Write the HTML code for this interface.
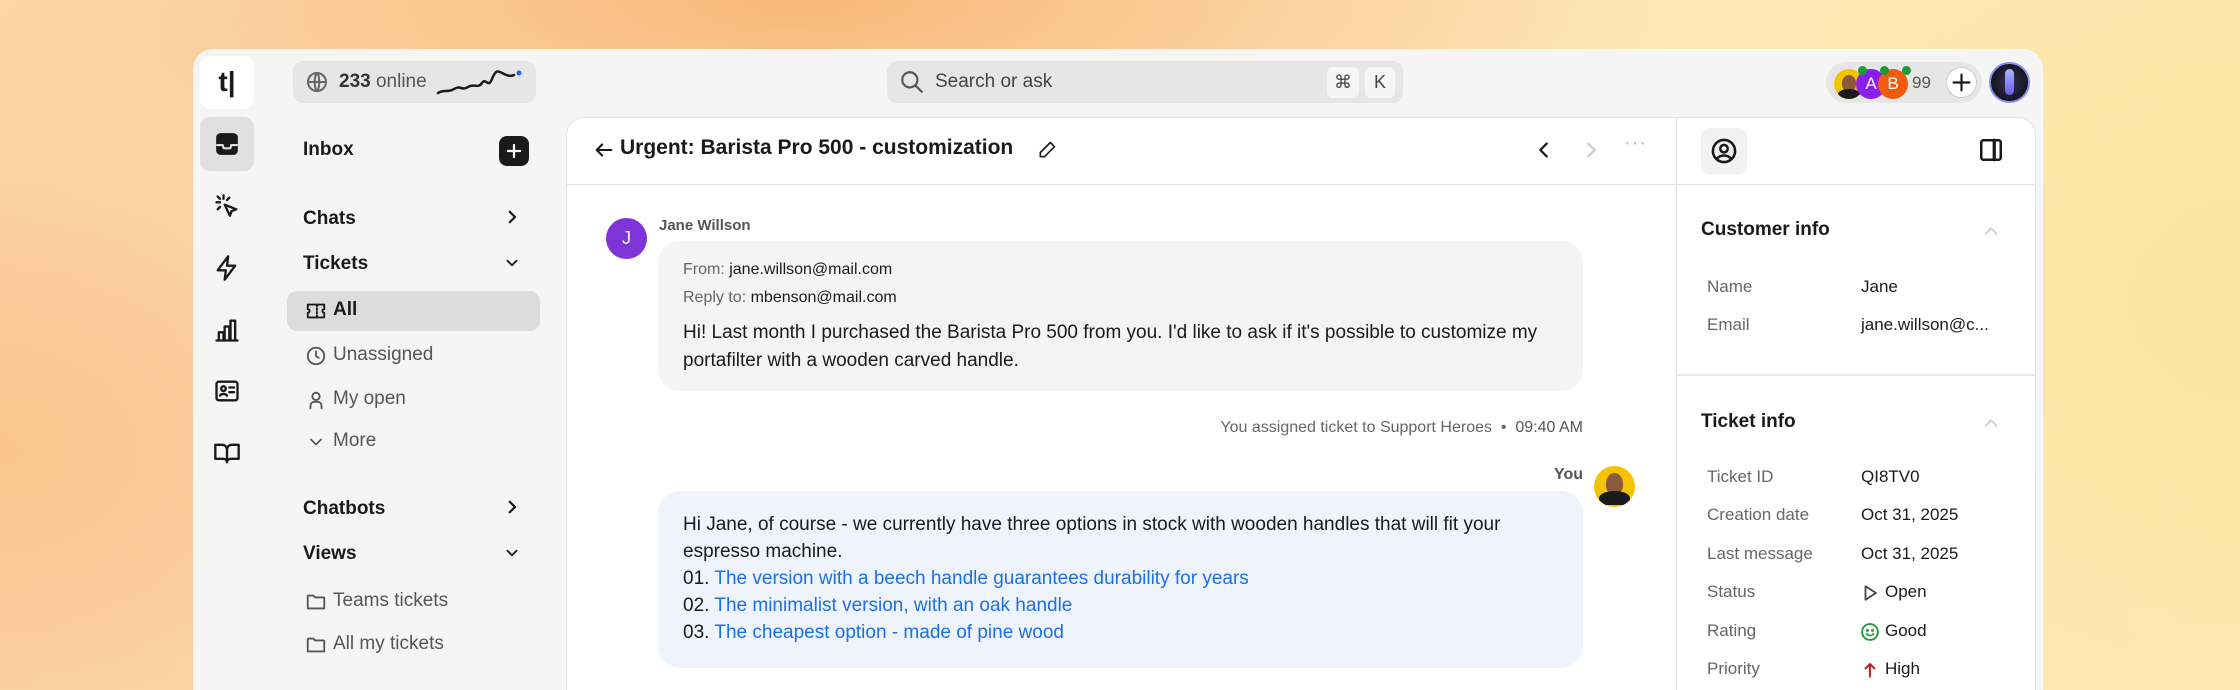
<!DOCTYPE html>
<html><head><meta charset="utf-8"><style>
*{box-sizing:border-box;margin:0;padding:0}
html,body{width:2240px;height:690px;overflow:hidden}
body{font-family:"Liberation Sans",sans-serif;color:#1a1a1a;position:relative}
.bg{position:absolute;left:0;top:0;width:2240px;height:690px;
background:radial-gradient(ellipse 700px 500px at 0px 450px,#f9c48f 0%,rgba(249,196,143,0) 100%),
radial-gradient(ellipse 900px 250px at 800px 0px,#f7b87a 0%,rgba(247,184,122,0) 100%),
radial-gradient(ellipse 700px 600px at 2240px 300px,#fbe3a0 0%,rgba(251,227,160,0) 100%),
linear-gradient(90deg,#fbdcae,#fde7bd 50%,#fdeab5)}
.abs{position:absolute}
.win{left:193px;top:49px;width:1850px;height:641px;background:#f5f5f5;border-radius:20px 20px 0 0;overflow:hidden}
.main{left:373px;top:68px;width:1470px;height:573px;background:#fff;border:1px solid #e3e3e3;border-bottom:none;border-radius:18px 18px 0 0;overflow:hidden}
svg{fill:none;stroke:#1a1a1a;stroke-width:2;stroke-linecap:round;stroke-linejoin:round}
.nav{font-size:19px;font-weight:bold;left:110px}
.item{font-size:19px;color:#555;left:140px}
.cnt{font-size:17px;color:#555;right:1327px;text-align:right}
.lbl{font-size:17px;color:#666;left:1514px}
.val{font-size:17px;color:#1a1a1a;left:1668px}
a{color:#1c6fe8;text-decoration:none}
</style></head><body>
<div class="bg"></div>
<div class="abs win">
 <div class="abs" style="left:7px;top:7px;width:54px;height:53px;background:#fff;border-radius:10px;font-size:28px;font-weight:bold;text-align:center;line-height:52px">t|</div>
 <div class="abs" style="left:7px;top:68px;width:54px;height:54px;background:#e0e0e0;border-radius:10px"></div>
 <svg class="abs" style="left:21px;top:82px" width="26" height="26" viewBox="0 0 24 24"><rect x="3" y="3" width="18" height="18" rx="3" fill="#1a1a1a"/><path d="M3 13h5l1 3h6l1-3h5" stroke="#e0e0e0"/></svg>
 <svg class="abs" style="left:20px;top:144px" width="28" height="28" viewBox="0 0 24 24"><path d="M10 10l10 4-4 1.5-1.5 4z"/><path d="M9 2v3M3 8h3M4 3l2 2M4 14l2-2M14 4l-2 2"/></svg>
 <svg class="abs" style="left:20px;top:205px" width="28" height="28" viewBox="0 0 24 24"><path d="M13 2L4 14h7l-1 8 9-12h-7z"/></svg>
 <svg class="abs" style="left:20px;top:267px" width="28" height="28" viewBox="0 0 24 24"><path d="M3 21h18M5 21v-7h4v7M10 21V9h4v12M15 21V4h4v17"/></svg>
 <svg class="abs" style="left:20px;top:328px" width="28" height="28" viewBox="0 0 24 24"><rect x="3" y="4" width="18" height="16" rx="2"/><circle cx="9" cy="10" r="2"/><path d="M6 16c1-2 5-2 6 0M14 9h4M14 13h4"/></svg>
 <svg class="abs" style="left:20px;top:390px" width="28" height="28" viewBox="0 0 24 24"><path d="M2 5h6a4 4 0 014 4v11a3 3 0 00-3-3H2zM22 5h-6a4 4 0 00-4 4v11a3 3 0 013-3h7z"/></svg>

 <div class="abs" style="left:100px;top:12px;width:243px;height:42px;background:#e6e6e6;border-radius:10px"></div>
 <svg class="abs" style="left:112px;top:21px" width="24" height="24" viewBox="0 0 24 24"><circle cx="12" cy="12" r="9" stroke="#666"/><path d="M3 12h18M12 3c3 3 3 15 0 18M12 3c-3 3-3 15 0 18" stroke="#666"/></svg>
 <div class="abs" style="left:146px;top:22px;font-size:19px;color:#555"><b style="color:#333">233</b> online</div>
 <svg class="abs" style="left:243px;top:18px" width="90" height="30" viewBox="0 0 90 30"><path d="M2 26c6-4 10 0 16-4s8 2 14-2 10 2 14-4 6 6 10-4 6-8 10-6 8 4 12 2" stroke-width="2.5"/><circle cx="83" cy="6" r="2.5" fill="#2266ee" stroke="none"/></svg>

 <div class="abs" style="left:694px;top:12px;width:516px;height:42px;background:#e6e6e6;border-radius:10px"></div>
 <svg class="abs" style="left:706px;top:20px" width="26" height="26" viewBox="0 0 24 24"><circle cx="10" cy="10" r="7" stroke="#555"/><path d="M15 15l6 6" stroke="#555"/></svg>
 <div class="abs" style="left:742px;top:22px;font-size:19px;color:#444">Search or ask</div>
 <div class="abs" style="left:1134px;top:18px;width:32px;height:31px;background:#f5f5f5;border-radius:6px;text-align:center;line-height:31px;font-size:18px;color:#444">⌘</div>
 <div class="abs" style="left:1172px;top:18px;width:30px;height:31px;background:#f5f5f5;border-radius:6px;text-align:center;line-height:31px;font-size:18px;color:#444">K</div>

 <div class="abs" style="left:1633px;top:13px;width:156px;height:41px;background:#e6e6e6;border-radius:21px"></div>
 <div class="abs" style="left:1641px;top:20px;width:30px;height:30px;border-radius:50%;background:#f5c400;overflow:hidden"><div style="margin:6px 0 0 8px;width:14px;height:16px;background:#8a5a3a;border-radius:50% 50% 40% 40%"></div><div style="margin:-2px 0 0 4px;width:22px;height:10px;background:#1a1a1a;border-radius:50% 50% 0 0"></div></div>
 <div class="abs" style="left:1663px;top:20px;width:30px;height:30px;border-radius:50%;background:#8a1ef0;color:#fff;font-size:17px;text-align:center;line-height:30px">A</div>
 <div class="abs" style="left:1685px;top:20px;width:30px;height:30px;border-radius:50%;background:#f25a0c;color:#fff;font-size:17px;text-align:center;line-height:30px">B</div>
 <div class="abs" style="left:1665px;top:17px;width:9px;height:9px;border-radius:50%;background:#1d9a3a"></div>
 <div class="abs" style="left:1687px;top:17px;width:9px;height:9px;border-radius:50%;background:#1d9a3a"></div>
 <div class="abs" style="left:1709px;top:17px;width:9px;height:9px;border-radius:50%;background:#1d9a3a"></div>
 <div class="abs" style="left:1719px;top:24px;font-size:17px;color:#555">99</div>
 <div class="abs" style="left:1753px;top:18px;width:31px;height:31px;border-radius:50%;background:#fff;border:1px solid #ccc"></div>
 <svg class="abs" style="left:1758px;top:23px" width="21" height="21" viewBox="0 0 24 24"><path d="M12 3v18M3 12h18" stroke-width="2.5"/></svg>
 <div class="abs" style="left:1796px;top:13px;width:41px;height:41px;border-radius:50%;background:radial-gradient(circle,#34345a,#151520 70%);border:2px solid #8a8cf0"></div>
 <div class="abs" style="left:1812px;top:20px;width:9px;height:26px;border-radius:5px;background:linear-gradient(#a8b8ff,#6e5af0)"></div>

 <div class="abs nav" style="top:90px">Inbox</div>
 <div class="abs" style="left:306px;top:87px;width:30px;height:30px;background:#1a1a1a;border-radius:8px"></div>
 <svg class="abs" style="left:312px;top:93px" width="18" height="18" viewBox="0 0 24 24"><path d="M12 4v16M4 12h16" stroke="#fff" stroke-width="3"/></svg>
 <div class="abs nav" style="top:159px">Chats</div>
 <div class="abs nav" style="top:204px">Tickets</div>
 <div class="abs nav" style="top:449px">Chatbots</div>
 <div class="abs nav" style="top:494px">Views</div>
 <svg class="abs" style="left:310px;top:159px" width="18" height="18" viewBox="0 0 24 24"><path d="M9 5l7 7-7 7" stroke-width="3"/></svg>
 <svg class="abs" style="left:310px;top:449px" width="18" height="18" viewBox="0 0 24 24"><path d="M9 5l7 7-7 7" stroke-width="3"/></svg>
 <svg class="abs" style="left:310px;top:205px" width="18" height="18" viewBox="0 0 24 24"><path d="M6 9l6 6 6-6" stroke-width="2.5"/></svg>
 <svg class="abs" style="left:310px;top:495px" width="18" height="18" viewBox="0 0 24 24"><path d="M6 9l6 6 6-6" stroke-width="2.5"/></svg>
 <div class="abs" style="left:94px;top:242px;width:253px;height:40px;background:#dcdcdc;border-radius:10px"></div>
 <svg class="abs" style="left:112px;top:251px" width="22" height="22" viewBox="0 0 24 24"><path d="M3 5h18v5a2 2 0 000 4v5H3v-5a2 2 0 000-4z"/><path d="M13 5v14" stroke-dasharray="2 2"/></svg>
 <div class="abs" style="left:140px;top:250px;font-size:19px;font-weight:bold">All</div>
 <svg class="abs" style="left:112px;top:296px" width="22" height="22" viewBox="0 0 24 24"><circle cx="12" cy="12" r="9" stroke="#555"/><path d="M12 7v5l3 2" stroke="#555"/></svg>
 <div class="abs item" style="top:295px">Unassigned</div><div class="abs cnt" style="top:296px">99+</div>
 <svg class="abs" style="left:112px;top:340px" width="22" height="22" viewBox="0 0 24 24"><circle cx="12" cy="8" r="4" stroke="#555"/><path d="M6 21v-3a4 4 0 014-4h4a4 4 0 014 4v3" stroke="#555"/></svg>
 <div class="abs item" style="top:339px">My open</div><div class="abs cnt" style="top:340px">8</div>
 <svg class="abs" style="left:113px;top:383px" width="20" height="20" viewBox="0 0 24 24"><path d="M6 9l6 6 6-6" stroke="#555"/></svg>
 <div class="abs item" style="top:381px">More</div>
 <svg class="abs" style="left:112px;top:542px" width="22" height="22" viewBox="0 0 24 24"><path d="M3 6a1 1 0 011-1h5l2 2h9a1 1 0 011 1v11H3z" stroke="#555"/></svg>
 <div class="abs item" style="top:541px">Teams tickets</div><div class="abs cnt" style="top:542px">23</div>
 <svg class="abs" style="left:112px;top:585px" width="22" height="22" viewBox="0 0 24 24"><path d="M3 6a1 1 0 011-1h5l2 2h9a1 1 0 011 1v11H3z" stroke="#555"/></svg>
 <div class="abs item" style="top:584px">All my tickets</div><div class="abs cnt" style="top:585px">99+</div>

 <div class="abs main">
  <div class="abs" style="left:0;top:66px;width:1480px;height:1px;background:#e3e3e3"></div>
  <div class="abs" style="left:1109px;top:0;width:1px;height:700px;background:#e3e3e3"></div>
  <svg class="abs" style="left:26px;top:21px" width="22" height="22" viewBox="0 0 24 24"><path d="M20 12H4M10 6l-6 6 6 6" stroke-width="2.3"/></svg>
  <div class="abs" style="left:53px;top:18px;font-size:21px;font-weight:bold">Urgent: Barista Pro 500 - customization</div>
  <svg class="abs" style="left:470px;top:22px" width="20" height="20" viewBox="0 0 24 24"><path d="M16 3l5 5L9 20H4v-5z"/></svg>
  <svg class="abs" style="left:966px;top:21px" width="22" height="22" viewBox="0 0 24 24"><path d="M15 5l-7 7 7 7" stroke-width="2.5"/></svg>
  <svg class="abs" style="left:1013px;top:21px" width="22" height="22" viewBox="0 0 24 24"><path d="M9 5l7 7-7 7" stroke="#ccc" stroke-width="2.5"/></svg>
  <div class="abs" style="left:1057px;top:14px;font-size:20px;color:#bbb;letter-spacing:1px">···</div>

  <div class="abs" style="left:39px;top:100px;width:41px;height:41px;border-radius:50%;background:#7e34d6;color:#fff;font-size:18px;text-align:center;line-height:41px">J</div>
  <div class="abs" style="left:92px;top:99px;font-size:15px;font-weight:bold;color:#555">Jane Willson</div>
  <div class="abs" style="left:91px;top:123px;width:925px;height:150px;background:#f4f4f4;border-radius:22px"></div>
  <div class="abs" style="left:116px;top:143px;font-size:16px;color:#666">From: <span style="color:#1a1a1a">jane.willson@mail.com</span></div>
  <div class="abs" style="left:116px;top:171px;font-size:16px;color:#666">Reply to: <span style="color:#1a1a1a">mbenson@mail.com</span></div>
  <div class="abs" style="left:116px;top:201px;font-size:19px;line-height:28px;width:880px">Hi! Last month I purchased the Barista Pro 500 from you. I'd like to ask if it's possible to customize my portafilter with a wooden carved handle.</div>

  <div class="abs" style="left:0;width:1016px;text-align:right;top:301px;font-size:16px;color:#666;white-space:nowrap">You assigned ticket to Support Heroes &nbsp;•&nbsp; <span style="color:#555">09:40 AM</span></div>
  <div class="abs" style="left:0;width:1016px;text-align:right;top:348px;font-size:16px;font-weight:bold;color:#555">You</div>
  <div class="abs" style="left:1027px;top:348px;width:41px;height:41px;border-radius:50%;background:#f5c400;overflow:hidden"><div style="margin:7px 0 0 12px;width:17px;height:21px;background:#8a5a3a;border-radius:50% 50% 40% 40%"></div><div style="margin:-3px 0 0 5px;width:31px;height:14px;background:#1a1a1a;border-radius:50% 50% 0 0"></div></div>
  <div class="abs" style="left:91px;top:373px;width:925px;height:177px;background:#eff4fc;border-radius:22px"></div>
  <div class="abs" style="left:116px;top:393px;font-size:19px;line-height:27px;width:880px">Hi Jane, of course - we currently have three options in stock with wooden handles that will fit your espresso machine.<br>01. <a>The version with a beech handle guarantees durability for years</a><br>02. <a>The minimalist version, with an oak handle</a><br>03. <a>The cheapest option - made of pine wood</a></div>

  <div class="abs" style="left:1134px;top:10px;width:46px;height:46px;background:#f2f2f2;border-radius:8px"></div>
  <svg class="abs" style="left:1143px;top:19px" width="28" height="28" viewBox="0 0 24 24"><circle cx="12" cy="12" r="9.5" stroke-width="2.2"/><circle cx="12" cy="10" r="3.2" stroke-width="2.2"/><path d="M6 18.5c3-3.5 9-3.5 12 0" stroke-width="2.2"/></svg>
  <svg class="abs" style="left:1411px;top:19px" width="26" height="26" viewBox="0 0 24 24"><rect x="3" y="3" width="18" height="18" rx="2" stroke-width="2.3"/><path d="M15 3v18" stroke-width="3"/></svg>
  <div class="abs" style="left:1134px;top:101px;font-size:19px;font-weight:bold">Customer info</div>
  <svg class="abs" style="left:1413px;top:102px" width="22" height="22" viewBox="0 0 24 24"><path d="M6 15l6-6 6 6" stroke="#ccc"/></svg>
  <div class="abs" style="left:1110px;top:256px;width:370px;height:2px;background:#e8e8e8"></div>
  <div class="abs" style="left:1134px;top:293px;font-size:19px;font-weight:bold">Ticket info</div>
  <svg class="abs" style="left:1413px;top:294px" width="22" height="22" viewBox="0 0 24 24"><path d="M6 15l6-6 6 6" stroke="#ccc"/></svg>
 </div>
 <div class="abs lbl" style="top:228px">Name</div><div class="abs val" style="top:228px">Jane</div>
 <div class="abs lbl" style="top:266px">Email</div><div class="abs val" style="top:266px">jane.willson@c...</div>
 <div class="abs lbl" style="top:418px">Ticket ID</div><div class="abs val" style="top:418px">QI8TV0</div>
 <div class="abs lbl" style="top:456px">Creation date</div><div class="abs val" style="top:456px">Oct 31, 2025</div>
 <div class="abs lbl" style="top:495px">Last message</div><div class="abs val" style="top:495px">Oct 31, 2025</div>
 <div class="abs lbl" style="top:533px">Status</div>
 <svg class="abs" style="left:1668px;top:535px" width="18" height="18" viewBox="0 0 24 24"><path d="M6 3l14 9-14 9z" stroke="#444" stroke-width="2.4"/></svg>
 <div class="abs val" style="left:1692px;top:533px">Open</div>
 <div class="abs lbl" style="top:572px">Rating</div>
 <svg class="abs" style="left:1667px;top:573px" width="20" height="20" viewBox="0 0 24 24"><circle cx="12" cy="12" r="9.5" stroke="#1d9a3a" stroke-width="2.2"/><path d="M8 14c2 3 6 3 8 0" stroke="#1d9a3a"/><circle cx="9" cy="10" r="0.8" stroke="#1d9a3a"/><circle cx="15" cy="10" r="0.8" stroke="#1d9a3a"/></svg>
 <div class="abs val" style="left:1692px;top:572px">Good</div>
 <div class="abs lbl" style="top:610px">Priority</div>
 <svg class="abs" style="left:1668px;top:612px" width="18" height="18" viewBox="0 0 24 24"><path d="M12 21V4M6 10l6-6 6 6" stroke="#c81e1e" stroke-width="2.6"/></svg>
 <div class="abs val" style="left:1692px;top:610px">High</div>
</div>
</body></html>
